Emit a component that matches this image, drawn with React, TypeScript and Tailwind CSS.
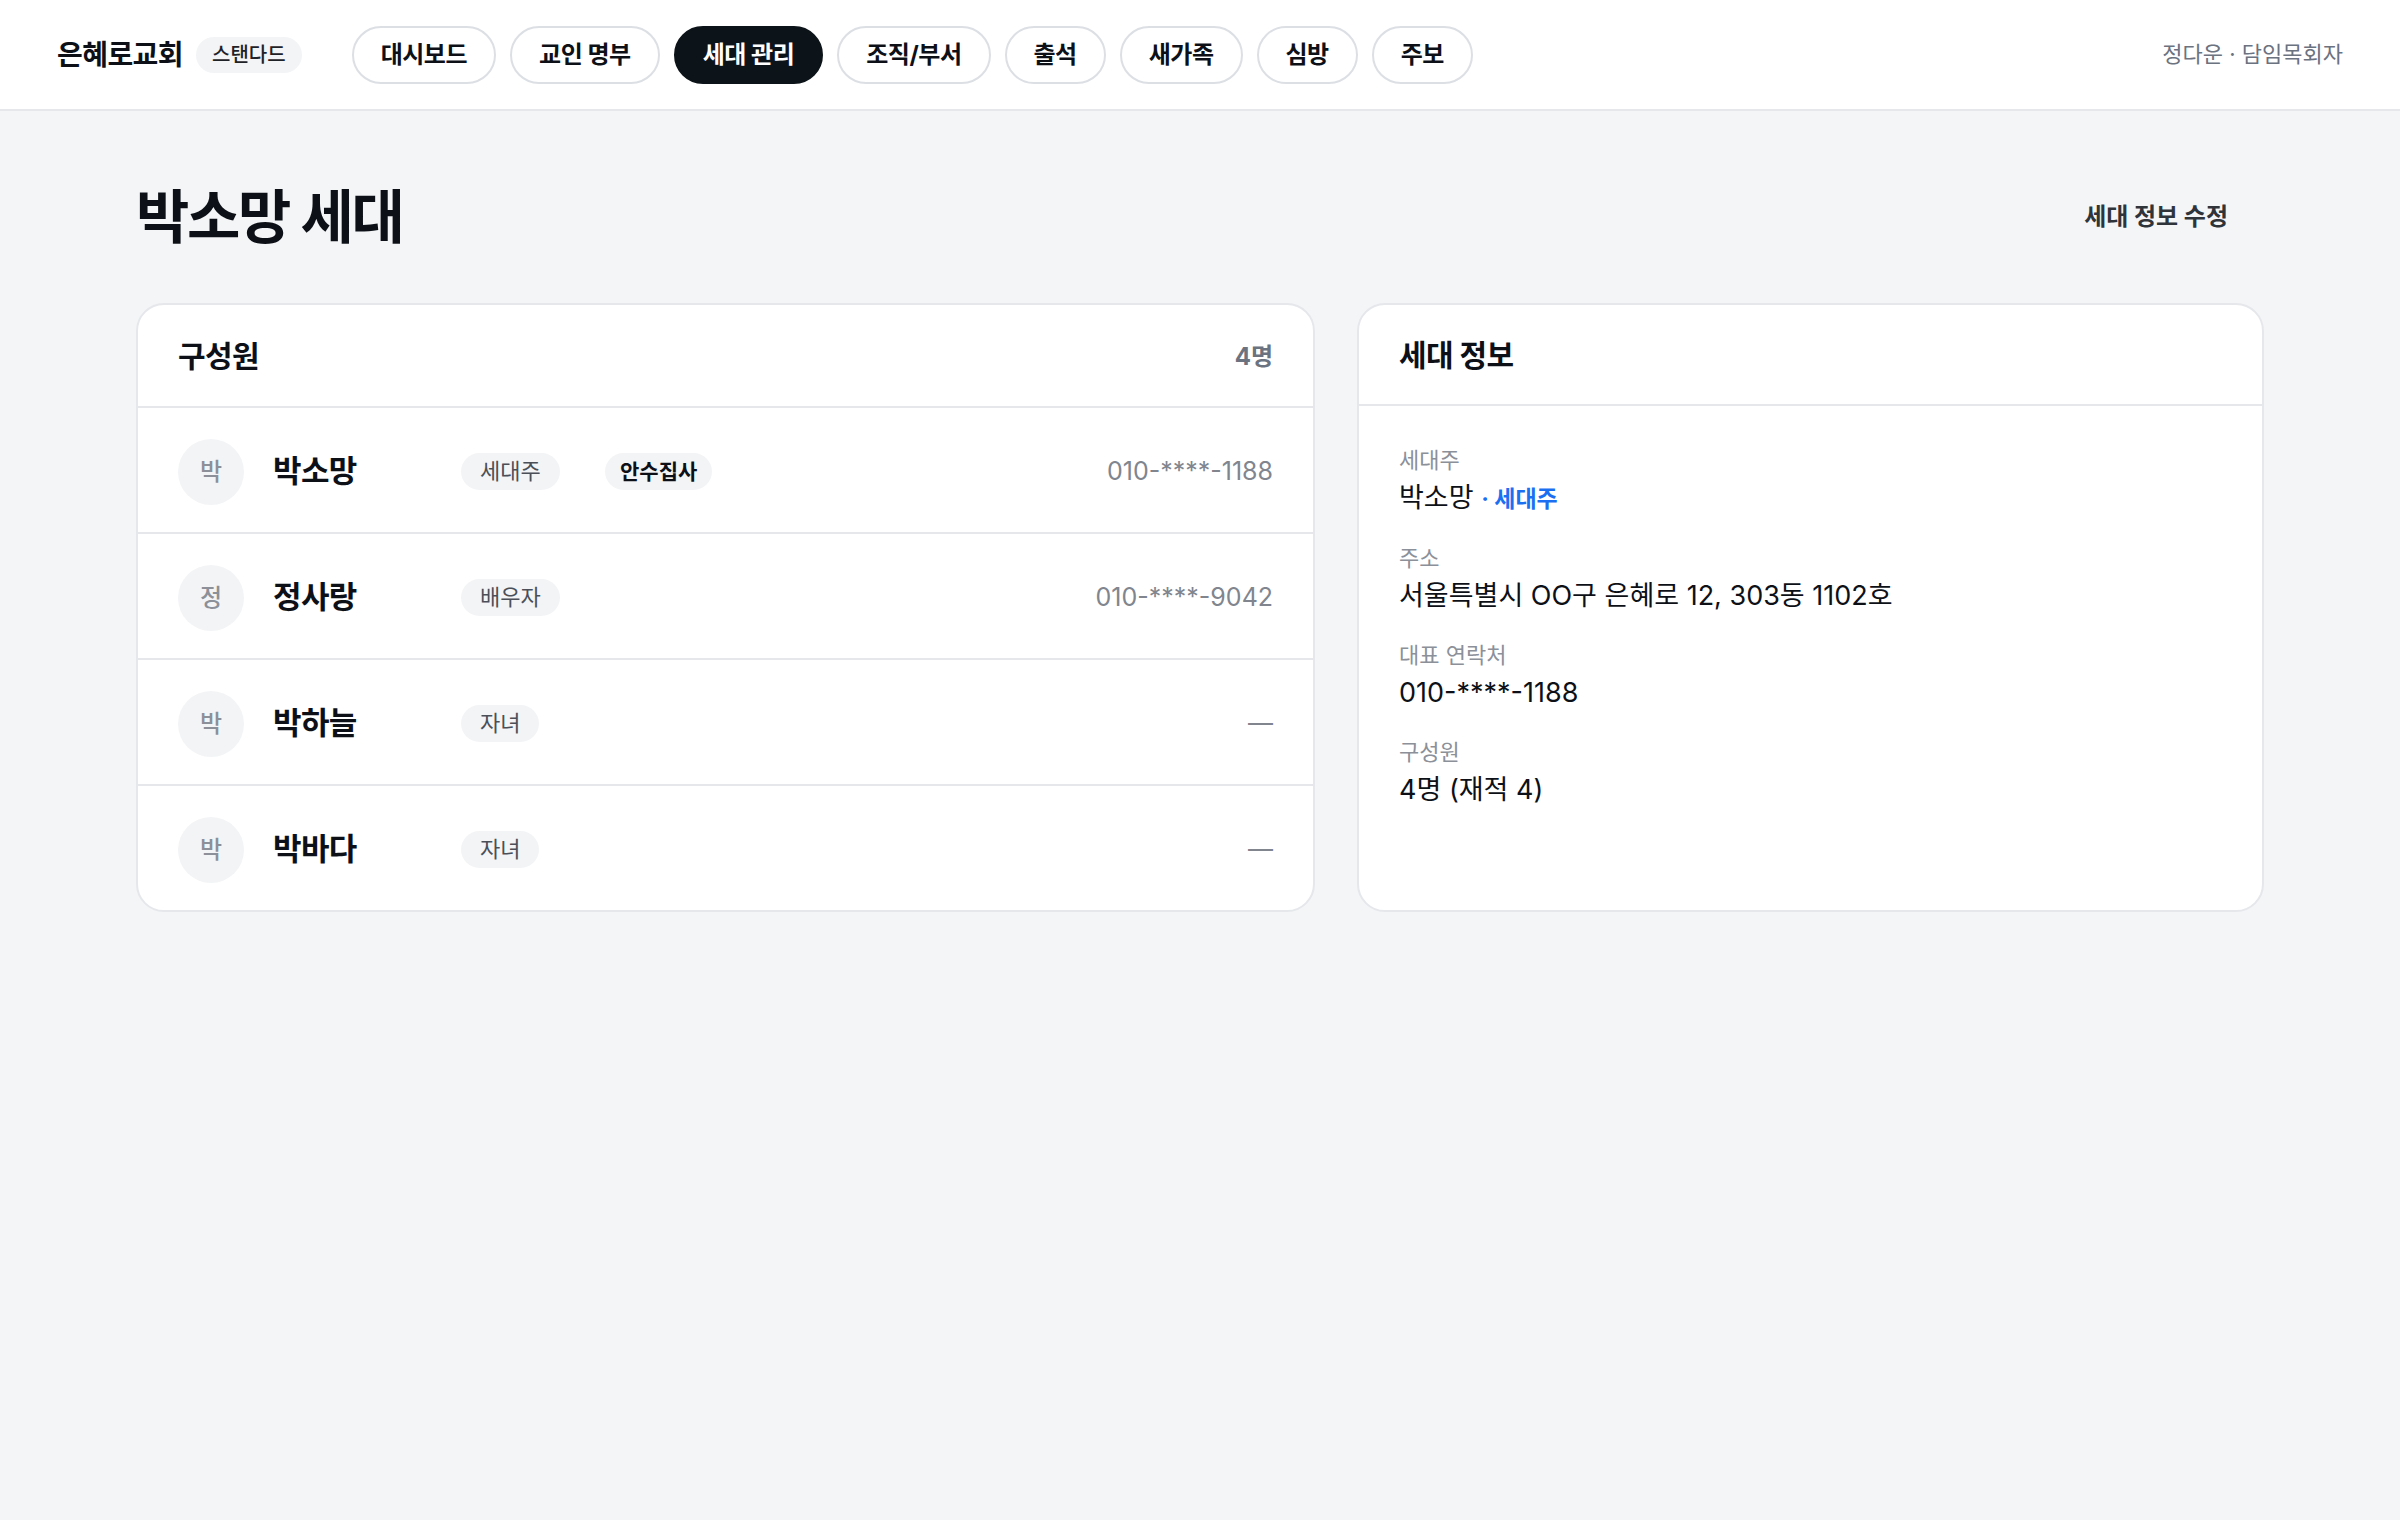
import React from "react";

// ----- data -----

const NAV = ["대시보드", "교인 명부", "세대 관리", "조직/부서", "출석", "새가족", "심방", "주보"];

type Member = {
  name: string;
  relation: string;
  office?: string;
  phone?: string;
};

const MEMBERS: Member[] = [
  { name: "박소망", relation: "세대주", office: "안수집사", phone: "010-****-1188" },
  { name: "정사랑", relation: "배우자", phone: "010-****-9042" },
  { name: "박하늘", relation: "자녀" },
  { name: "박바다", relation: "자녀" },
];

const FONT = { fontFamily: 'Inter, "Noto Sans CJK KR", "Noto Sans", sans-serif' };

// ----- header -----

function TopBar() {
  return (
    <header className="h-[111px] bg-white border-b-2 border-[#e5e7eb] flex items-center px-[57px]">
      <div className="flex items-center">
        <span className="text-[28px] font-bold text-[#0d1117] tracking-[-0.02em]">은혜로교회</span>
        <span className="ml-[13px] h-[36px] px-[16px] rounded-full bg-[#f3f4f6] text-[20px] font-medium text-[#1f2328] flex items-center">
          스탠다드
        </span>
      </div>
      <nav className="ml-[50px] flex items-center gap-[14px]">
        {NAV.map((n) => {
          const active = n === "세대 관리";
          return (
            <button
              key={n}
              className={
                active
                  ? "h-[58px] px-[27px] rounded-full border-2 border-[#0d1419] bg-[#0d1419] text-white text-[24px] font-bold tracking-[-0.02em]"
                  : "h-[58px] px-[27px] rounded-full border-2 border-[#dcdfe4] bg-white text-[#0d1117] text-[24px] font-bold tracking-[-0.02em]"
              }
            >
              {n}
            </button>
          );
        })}
      </nav>
      <div className="ml-auto text-[22px] text-[#6b7280]">정다운 · 담임목회자</div>
    </header>
  );
}

// ----- members card -----

function MemberRow({ m }: { m: Member }) {
  return (
    <div className="h-[126px] px-[40px] pt-[3px] flex items-center border-t-2 border-[#e5e7eb]">
      <div className="w-[66px] h-[66px] rounded-full bg-[#f3f4f6] flex items-center justify-center text-[24px] font-medium text-[#8b9099]">
        {m.name[0]}
      </div>
      <div className="ml-[29px] w-[188px] text-[31px] font-bold text-[#0d1117] tracking-[-0.02em]">{m.name}</div>
      <div className="w-[144px]">
        <span className="inline-flex h-[37px] items-center px-[19px] rounded-full bg-[#f3f4f6] text-[22px] text-[#4b5058]">
          {m.relation}
        </span>
      </div>
      {m.office && (
        <span className="inline-flex h-[37px] items-center px-[15px] rounded-full bg-[#f3f4f6] text-[21px] font-bold text-[#0d1117]">
          {m.office}
        </span>
      )}
      <div className="ml-auto text-[25px] text-[#80858e]">{m.phone ?? "—"}</div>
    </div>
  );
}

function MembersCard() {
  return (
    <section className="bg-white rounded-[28px] border-2 border-[#e5e7eb] overflow-hidden">
      <div className="h-[101px] px-[40px] pt-[2px] flex items-center justify-between">
        <h2 className="text-[30px] font-bold text-[#0d1117] tracking-[-0.02em]">구성원</h2>
        <span className="text-[24px] font-bold text-[#6b7280]">{MEMBERS.length}명</span>
      </div>
      {MEMBERS.map((m) => (
        <MemberRow key={m.name} m={m} />
      ))}
    </section>
  );
}

// ----- household info card -----

function Field({ label, children }: { label: string; children: React.ReactNode }) {
  return (
    <div>
      <div className="text-[22px] leading-[30px] text-[#8b9099]">{label}</div>
      <div className="mt-[5px] text-[27px] leading-[36px] text-[#0d1117]">{children}</div>
    </div>
  );
}

function InfoCard() {
  return (
    <section className="bg-white rounded-[28px] border-2 border-[#e5e7eb]">
      <div className="h-[101px] px-[40px] pt-[2px] flex items-center border-b-2 border-[#e5e7eb]">
        <h2 className="text-[30px] font-bold text-[#0d1117] tracking-[-0.02em]">세대 정보</h2>
      </div>
      <div className="px-[40px] pt-[39px] flex flex-col gap-[26px]">
        <Field label="세대주">
          박소망 <span className="text-[23px] font-bold text-[#1d6ff2]">· 세대주</span>
        </Field>
        <Field label="주소">서울특별시 OO구 은혜로 12, 303동 1102호</Field>
        <Field label="대표 연락처">010-****-1188</Field>
        <Field label="구성원">4명 (재적 4)</Field>
      </div>
    </section>
  );
}

// ----- page -----

export default function App() {
  return (
    <div className="min-h-[1520px] bg-[#f4f5f7]" style={FONT}>
      <TopBar />
      <main className="px-[136px] pt-[72px]">
        <div className="h-[68px] flex items-center justify-between mb-[52px]">
          <h1 className="text-[58px] font-bold text-[#0d1117] tracking-[-0.04em]">박소망 세대</h1>
          <button className="px-[36px] text-[24px] font-bold text-[#2f343b]">세대 정보 수정</button>
        </div>
        <div className="grid grid-cols-[1.3fr_1fr] gap-[42px] items-stretch">
          <MembersCard />
          <InfoCard />
        </div>
      </main>
    </div>
  );
}
